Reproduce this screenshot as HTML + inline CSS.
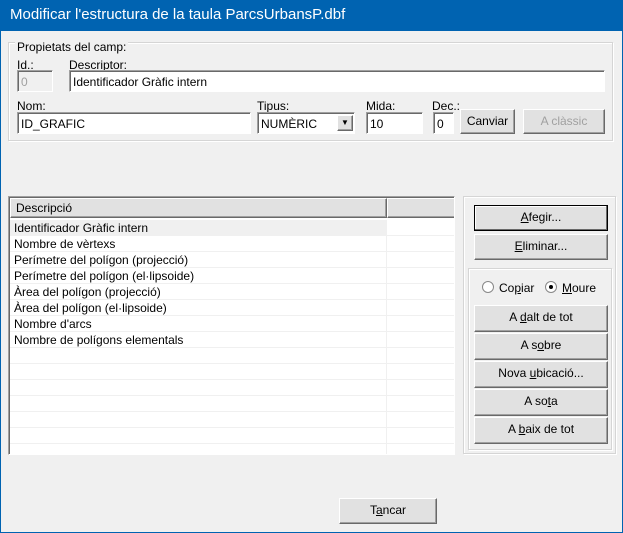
<!DOCTYPE html><html><head><style>
*{box-sizing:border-box;margin:0;padding:0}
body{width:623px;height:533px;overflow:hidden;background:#0063b1;font-family:"Liberation Sans",sans-serif;font-size:12px;color:#000;position:relative}
.a{position:absolute}
.win{left:1px;top:31px;width:621px;height:501px;background:#f0f0f0}
.title{left:10px;top:6px;color:#fff;font-size:15px}
.grp{border:1px solid #d5d5d5;box-shadow:inset 1px 1px 0 #fff,1px 1px 0 #fff}
.lbl{background:#f0f0f0;padding:0 2px}
.ed{background:#fff;border-top:1px solid #a0a0a0;border-left:1px solid #a0a0a0;border-right:1px solid #fff;border-bottom:1px solid #fff;box-shadow:inset 1px 1px 0 #696969;padding:4px 0 0 3px;white-space:nowrap}
.btn{background:#e1e1e1;border-top:1px solid #fff;border-left:1px solid #fff;border-right:1px solid #696969;border-bottom:1px solid #696969;box-shadow:inset -1px -1px 0 #a0a0a0;text-align:center;line-height:23px}
.row{position:absolute;left:0;width:444px;height:16px;border-bottom:1px solid #f0f0f0;padding-left:4px;line-height:16px}
.row:after{content:"";position:absolute;left:376px;top:0;width:1px;height:16px;background:#f0f0f0}
.sel{position:absolute;left:0;top:0;width:376px;height:16px;background:#f0f0f0}
u{text-decoration:underline}
</style></head><body>
<div class="a title">Modificar l'estructura de la taula ParcsUrbansP.dbf</div>
<div class="a win"></div>
<div class="a grp" style="left:8px;top:42px;width:605px;height:99px"></div>
<div class="a lbl" style="left:15px;top:40px">Propietats del camp:</div>
<div class="a" style="left:17px;top:58px">Id.:</div>
<div class="a" style="left:69px;top:58px">Descriptor:</div>
<div class="a ed" style="left:17px;top:70px;width:36px;height:22px;background:#f0f0f0;color:#a0a0a0">0</div>
<div class="a ed" style="left:69px;top:70px;width:536px;height:22px">Identificador Gràfic intern</div>
<div class="a" style="left:17px;top:99px">Nom:</div>
<div class="a" style="left:257px;top:99px">Tipus:</div>
<div class="a" style="left:366px;top:99px">Mida:</div>
<div class="a" style="left:432px;top:99px">Dec.:</div>
<div class="a ed" style="left:17px;top:112px;width:234px;height:22px">ID_GRAFIC</div>
<div class="a ed" style="left:257px;top:112px;width:98px;height:22px">NUMÈRIC</div>
<div class="a btn" style="left:337px;top:115px;width:16px;height:16px;line-height:14px;font-size:8px">▼</div>
<div class="a ed" style="left:366px;top:112px;width:57px;height:22px">10</div>
<div class="a ed" style="left:433px;top:112px;width:21px;height:22px">0</div>
<div class="a btn" style="left:460px;top:109px;width:55px;height:25px">Canviar</div>
<div class="a btn" style="left:523px;top:109px;width:82px;height:25px;color:#a0a0a0">A clàssic</div>

<div class="a" style="left:8px;top:196px;width:447px;height:259px;background:#fff;border-top:1px solid #a0a0a0;border-left:1px solid #a0a0a0;border-right:1px solid #fff;border-bottom:1px solid #fff;box-shadow:inset 1px 1px 0 #696969;overflow:hidden">
<div class="a btn" style="left:1px;top:1px;width:377px;height:20px;line-height:19px;text-align:left;padding-left:5px">Descripció</div>
<div class="a btn" style="left:378px;top:1px;width:70px;height:20px"></div>
<div style="position:absolute;left:1px;top:23px">
<div class="row" style="top:0"><div class="sel"></div><span style="position:relative">Identificador Gràfic intern</span></div>
<div class="row" style="top:16px">Nombre de vèrtexs</div>
<div class="row" style="top:32px">Perímetre del polígon (projecció)</div>
<div class="row" style="top:48px">Perímetre del polígon (el·lipsoide)</div>
<div class="row" style="top:64px">Àrea del polígon (projecció)</div>
<div class="row" style="top:80px">Àrea del polígon (el·lipsoide)</div>
<div class="row" style="top:96px">Nombre d'arcs</div>
<div class="row" style="top:112px">Nombre de polígons elementals</div>
<div class="row" style="top:128px"></div><div class="row" style="top:144px"></div><div class="row" style="top:160px"></div><div class="row" style="top:176px"></div><div class="row" style="top:192px"></div><div class="row" style="top:208px"></div><div class="row" style="top:224px"></div>
</div></div>

<div class="a grp" style="left:463px;top:196px;width:153px;height:258px"></div>
<div class="a btn" style="left:474px;top:205px;width:134px;height:26px;border:1px solid #000;box-shadow:inset -1px -1px 0 #696969,inset 1px 1px 0 #fff"><u>A</u>fegir...</div>
<div class="a btn" style="left:474px;top:234px;width:134px;height:26px"><u>E</u>liminar...</div>
<div class="a grp" style="left:468px;top:268px;width:144px;height:182px"></div>
<div class="a" style="left:482px;top:281px;width:12px;height:12px;border-radius:50%;background:#fff;border:1px solid #888"></div>
<div class="a" style="left:499px;top:281px">Co<u>p</u>iar</div>
<div class="a" style="left:545px;top:281px;width:12px;height:12px;border-radius:50%;background:#fff;border:1px solid #888"></div>
<div class="a" style="left:549px;top:285px;width:4px;height:4px;border-radius:50%;background:#000"></div>
<div class="a" style="left:562px;top:281px"><u>M</u>oure</div>
<div class="a btn" style="left:474px;top:305px;width:134px;height:27px">A <u>d</u>alt de tot</div>
<div class="a btn" style="left:474px;top:333px;width:134px;height:27px">A s<u>o</u>bre</div>
<div class="a btn" style="left:474px;top:361px;width:134px;height:27px">Nova <u>u</u>bicació...</div>
<div class="a btn" style="left:474px;top:389px;width:134px;height:27px">A so<u>t</u>a</div>
<div class="a btn" style="left:474px;top:417px;width:134px;height:27px">A <u>b</u>aix de tot</div>
<div class="a btn" style="left:339px;top:498px;width:98px;height:26px">T<u>a</u>ncar</div>
</body></html>
